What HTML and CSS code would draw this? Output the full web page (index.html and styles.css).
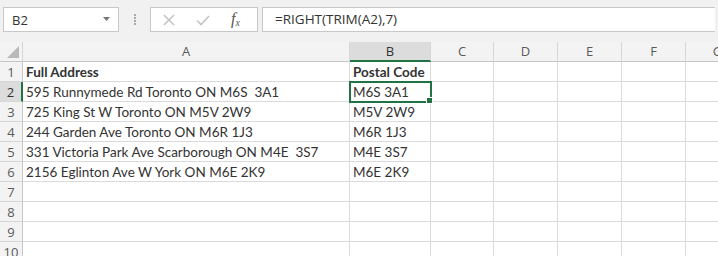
FILE: index.html
```html
<!DOCTYPE html>
<html>
<head>
<meta charset="utf-8">
<link rel="stylesheet" href="styles.css">
</head>
<body>
<div class="app">
  <div class="toolbar">
    <div class="namebox">
      <span class="name">B2</span>
      <svg class="dd" width="7" height="4" viewBox="0 0 7 4"><path d="M0 0H7L3.5 4Z" fill="#777"/></svg>
    </div>
    <div class="grip"><i></i><i></i><i></i><i></i></div>
    <div class="fxbox">
      <svg class="ic" width="14" height="14" viewBox="0 0 14 14"><path d="M2 2L12 12M12 2L2 12" stroke="#c4c4c4" stroke-width="1.6" fill="none"/></svg>
      <svg class="ic" width="16" height="14" viewBox="0 0 16 14"><path d="M2 7.5L6 11.5L14 3" stroke="#c4c4c4" stroke-width="1.6" fill="none"/></svg>
      <span class="fx">f<sub>x</sub></span>
    </div>
    <div class="formula">=RIGHT(TRIM(A2),7)</div>
  </div>
  <div class="sheet">
    <div class="hd corner"><svg width="12" height="12" viewBox="0 0 12 12"><path d="M12 0V12H0Z" fill="#b9b9b9"/></svg></div>
    <div class="hd">A</div><div class="hd sel-col">B</div><div class="hd">C</div><div class="hd">D</div><div class="hd">E</div><div class="hd">F</div><div class="hd">G</div>

    <div class="rh">1</div><div class="c b">Full Address</div><div class="c b">Postal Code</div><div class="c"></div><div class="c"></div><div class="c"></div><div class="c"></div><div class="c"></div>
    <div class="rh sel-row">2</div><div class="c">595 Runnymede Rd Toronto ON M6S&nbsp;&nbsp;3A1</div><div class="c active">M6S 3A1</div><div class="c"></div><div class="c"></div><div class="c"></div><div class="c"></div><div class="c"></div>
    <div class="rh">3</div><div class="c">725 King St W Toronto ON M5V 2W9</div><div class="c">M5V 2W9</div><div class="c"></div><div class="c"></div><div class="c"></div><div class="c"></div><div class="c"></div>
    <div class="rh">4</div><div class="c">244 Garden Ave Toronto ON M6R 1J3</div><div class="c">M6R 1J3</div><div class="c"></div><div class="c"></div><div class="c"></div><div class="c"></div><div class="c"></div>
    <div class="rh">5</div><div class="c">331 Victoria Park Ave Scarborough ON M4E&nbsp;&nbsp;3S7</div><div class="c">M4E 3S7</div><div class="c"></div><div class="c"></div><div class="c"></div><div class="c"></div><div class="c"></div>
    <div class="rh">6</div><div class="c">2156 Eglinton Ave W York ON M6E 2K9</div><div class="c">M6E 2K9</div><div class="c"></div><div class="c"></div><div class="c"></div><div class="c"></div><div class="c"></div>
    <div class="rh">7</div><div class="c"></div><div class="c"></div><div class="c"></div><div class="c"></div><div class="c"></div><div class="c"></div><div class="c"></div>
    <div class="rh">8</div><div class="c"></div><div class="c"></div><div class="c"></div><div class="c"></div><div class="c"></div><div class="c"></div><div class="c"></div>
    <div class="rh">9</div><div class="c"></div><div class="c"></div><div class="c"></div><div class="c"></div><div class="c"></div><div class="c"></div><div class="c"></div>
    <div class="rh">10</div><div class="c"></div><div class="c"></div><div class="c"></div><div class="c"></div><div class="c"></div><div class="c"></div><div class="c"></div>
  </div>
</div>
</body>
</html>
```
FILE: styles.css
```css
* { box-sizing: border-box; }
html, body { margin: 0; padding: 0; }
body { width: 718px; height: 256px; overflow: hidden; background: #fff; }
.app { width: 718px; height: 256px; overflow: hidden; }

.toolbar {
  height: 42px;
  background: #f1f1f1;
  display: flex;
  align-items: flex-start;
  padding-top: 7px;
  font-family: "Open Sans", "Liberation Sans", sans-serif;
  color: #333;
}
.namebox {
  margin-left: 3px;
  width: 116px;
  height: 25px;
  background: #fff;
  border: 1px solid #c8c8c8;
  display: flex;
  align-items: center;
  justify-content: space-between;
  padding: 0 8px 0 8px;
  font-size: 13px;
}
.name { color: #333; }
.dd { margin-bottom: 2px; }
.grip {
  width: 31px;
  height: 25px;
  display: flex;
  flex-direction: column;
  align-items: center;
  justify-content: center;
  gap: 1px;
}
.grip i { display: block; width: 2px; height: 2px; background: #a8a8a8; }
.fxbox {
  width: 108px;
  height: 25px;
  background: #fff;
  border: 1px solid #c8c8c8;
  display: flex;
  align-items: center;
  padding-left: 11px;
  gap: 19px;
}
.fx {
  font-family: "Liberation Serif", serif;
  font-style: italic;
  font-size: 16px;
  color: #555;
  margin-left: 1px;
  line-height: 1;
}
.fx sub { font-size: 10px; vertical-align: -2px; }
.formula {
  margin-left: 4px;
  flex: 1;
  margin-right: 3px;
  height: 25px;
  background: #fff;
  border: 1px solid #c8c8c8;
  border-right: none;
  padding-left: 12px;
  font-size: 13.5px;
  line-height: 23px;
  color: #333;
}

.sheet {
  display: grid;
  grid-template-columns: 23px 327px 81px 63px 64px 64px 64px 64px;
  grid-auto-rows: 20px;
  width: 750px;
  font-family: "Lato", "Liberation Sans", sans-serif;
  font-size: 13.5px;
  color: #333;
}
.hd {
  background: #f3f3f3;
  border-right: 1px solid #d6d6d6;
  border-bottom: 1px solid #c6c6c6;
  text-align: center;
  font-family: "Open Sans", "Liberation Sans", sans-serif;
  font-size: 13px;
  line-height: 19px;
  color: #5a5a5a;
}
.corner { display: flex; align-items: flex-end; justify-content: flex-end; padding: 0 3px 3px 0; }
.sel-col { background: #dcdcdc; border-bottom: 2px solid #217346; color: #333; }
.rh {
  background: #f3f3f3;
  border-right: 1px solid #c6c6c6;
  border-bottom: 1px solid #d6d6d6;
  text-align: center;
  font-family: "Open Sans", "Liberation Sans", sans-serif;
  font-size: 13px;
  line-height: 20px;
  color: #5a5a5a;
}
.sel-row { background: #dcdcdc; border-right: 2px solid #217346; color: #333; }
.c {
  border-right: 1px solid #dadada;
  border-bottom: 1px solid #dadada;
  padding: 1px 0 0 3px;
  line-height: 19px;
  white-space: pre;
  overflow: visible;
}
.b { font-weight: bold; }
.active {
  position: relative;
  outline: 2px solid #217346;
  outline-offset: -1px;
  border-color: transparent;
}
.active::after {
  content: "";
  position: absolute;
  right: -3px;
  bottom: -3px;
  width: 5px;
  height: 5px;
  background: #217346;
  border: 1px solid #fff;
}
```
